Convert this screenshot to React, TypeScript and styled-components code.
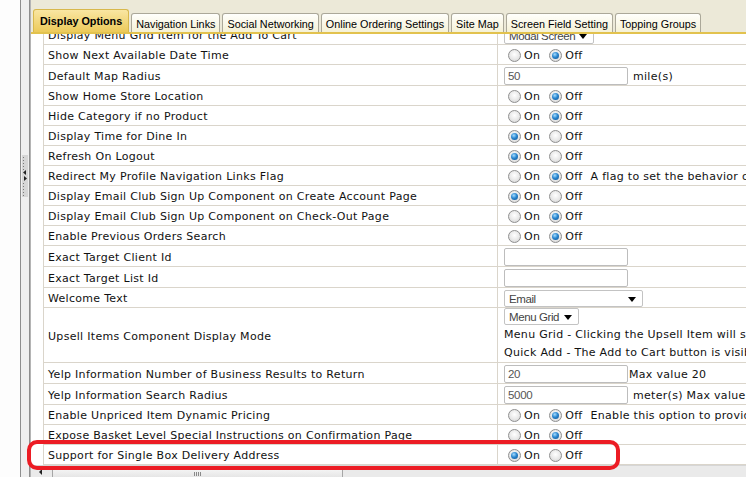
import React from 'react';
import styled, { createGlobalStyle, css } from 'styled-components';

const GlobalStyle = createGlobalStyle`
  html, body {
    margin: 0;
    padding: 0;
    background: #fff;
    overflow: hidden;
  }
  body {
    font-family: "DejaVu Sans", Verdana, sans-serif;
  }
`;

const Page = styled.div`
  position: relative;
  display: flex;
  width: 746px;
  height: 477px;
  overflow: hidden;
`;

const LeftPane = styled.div`
  flex: none;
  width: 20px;
  background: #fdfdfd;
`;

const Splitter = styled.div`
  flex: none;
  width: 8px;
  border-left: 1px solid #8e8e8e;
  border-right: 1px solid #8e8e8e;
  background: #efefef;
  padding-top: 155px;
  display: flex;
  flex-direction: column;
  align-items: center;
`;

const Handle = styled.div`
  width: 6px;
  height: 42px;
  background: #d6d6d6;
  display: flex;
`;

const Panel = styled.div`
  flex: 1;
  min-width: 0;
  display: flex;
  flex-direction: column;
  border-left: 1px solid #b4b4b4;
`;

const TabStrip = styled.div`
  flex: none;
  height: 32px;
  background: #ece9d8;
  border-bottom: 2px solid #e2c24e;
  display: flex;
  align-items: flex-end;
  gap: 2px;
  padding-left: 2px;
`;

const Tab = styled.div<{ $active?: boolean }>`
  flex: none;
  box-sizing: border-box;
  height: 19px;
  padding: 2px 4px 0;
  display: flex;
  align-items: center;
  font: 10.8px "Liberation Sans", Arial, sans-serif;
  color: #000;
  white-space: nowrap;
  border: 1px solid #aba899;
  border-bottom: none;
  border-radius: 3px 3px 0 0;
  background: linear-gradient(#fffffc, #f5f1d6);
  ${(p) =>
    p.$active &&
    css`
      height: 23px;
      padding: 0 6px;
      font-weight: bold;
      border-color: #d8b84c;
      background: linear-gradient(#f9e6a2, #ecca5a);
    `}
`;

const Body = styled.div`
  flex: 1;
  min-height: 0;
  overflow: hidden;
  padding-left: 12px;
  background: #fff;
`;

const Table = styled.div`
  margin-top: -9px;
  width: 900px;
  border-left: 1px solid #dad5cb;
`;

const Row = styled.div`
  display: grid;
  grid-template-columns: 453px 1fr;
  border-bottom: 1px solid #dad5cb;
`;

const Label = styled.div`
  min-height: 17px;
  padding: 2px 4px 0;
  display: flex;
  align-items: center;
  font-size: 11px;
  letter-spacing: 0.3px;
  color: #111;
  white-space: nowrap;
`;

const Value = styled.div<{ $stack?: boolean }>`
  border-left: 1px solid #dad5cb;
  padding: 2px 0 0 6px;
  min-height: 17px;
  display: flex;
  align-items: center;
  white-space: nowrap;
  font-size: 11px;
  letter-spacing: 0.3px;
  color: #111;
  ${(p) =>
    p.$stack &&
    css`
      flex-direction: column;
      align-items: flex-start;
      padding-top: 0;
    `}
`;

const RadioGroup = styled.div`
  display: flex;
  align-items: center;
  gap: 9px;
  padding-left: 4px;
`;

const RadioOption = styled.span`
  display: inline-flex;
  align-items: center;
  gap: 3px;
`;

const RadioDot = styled.span<{ $checked: boolean }>`
  box-sizing: border-box;
  width: 13px;
  height: 13px;
  border-radius: 50%;
  border: 1px solid #8f8f8f;
  background: radial-gradient(circle at 50% 40%, #ffffff 0%, #e8e8e8 55%, #cdcdcd 100%);
  display: inline-flex;
  align-items: center;
  justify-content: center;
  ${(p) =>
    p.$checked &&
    css`
      &::after {
        content: '';
        width: 7px;
        height: 7px;
        border-radius: 50%;
        background: radial-gradient(circle at 40% 35%, #a6dcff 0%, #2b87cf 45%, #0c4c8c 100%);
      }
    `}
`;

const Note = styled.span`
  margin-left: 8px;
`;

const TextBox = styled.input`
  box-sizing: border-box;
  width: 124px;
  height: 18px;
  margin: 0;
  border: 1px solid #bdbdbd;
  border-radius: 2px;
  padding: 0 3px;
  font: 11.5px "Liberation Sans", Arial, sans-serif;
  letter-spacing: -0.3px;
  color: #555;
  background: #fff;
  outline: none;
`;

const Suffix = styled.span<{ $tight?: boolean }>`
  margin-left: ${(p) => (p.$tight ? 1 : 5)}px;
`;

const Select = styled.div<{ $width: number }>`
  box-sizing: border-box;
  width: ${(p) => p.$width}px;
  height: 17px;
  border: 1px solid #c3c3c3;
  border-radius: 2px;
  padding: 0 6px 0 4px;
  display: flex;
  align-items: center;
  justify-content: space-between;
  font: 11.5px "Liberation Sans", Arial, sans-serif;
  letter-spacing: -0.4px;
  color: #444;
  background: #fff;
`;

const Caret = styled.span`
  width: 0;
  height: 0;
  margin-top: 2px;
  border-left: 4px solid transparent;
  border-right: 4px solid transparent;
  border-top: 5px solid #000;
`;

const Notes = styled.div`
  margin-top: 1px;
  line-height: 18px;
`;

const HScroll = styled.div`
  flex: none;
  height: 11px;
  border-top: 1px solid #d6d6d6;
  background: #eaeaea;
  display: flex;
  align-items: flex-start;
`;

const ScrollArrow = styled.div`
  flex: none;
  width: 19px;
  height: 11px;
  display: flex;
  align-items: center;
  justify-content: center;
  &::before {
    content: '';
    border-top: 3px solid transparent;
    border-bottom: 3px solid transparent;
    border-right: 3px solid #222;
  }
`;

const Thumb = styled.div`
  flex: none;
  box-sizing: border-box;
  width: 291px;
  height: 12px;
  margin: 1px 0 0 2px;
  border: 1px solid #a6a6a6;
  border-bottom: none;
  border-radius: 2px 2px 0 0;
  background: linear-gradient(#f7f7f7, #e2e2e2);
  display: flex;
  justify-content: center;
  align-items: center;
  gap: 1px;
`;

const Grip = styled.span`
  width: 1px;
  height: 4px;
  background: #8a8a8a;
`;

const Callout = styled.div`
  position: absolute;
  left: 27px;
  top: 440px;
  width: 593px;
  height: 30px;
  box-sizing: border-box;
  border: 4px solid #ec1c24;
  border-radius: 10px;
  pointer-events: none;
`;

const tabs = [
  'Display Options',
  'Navigation Links',
  'Social Networking',
  'Online Ordering Settings',
  'Site Map',
  'Screen Field Setting',
  'Topping Groups',
];

type Setting =
  | { label: string; kind: 'radio'; on: boolean; note?: string }
  | { label: string; kind: 'input'; text: string; suffix?: string; tight?: boolean }
  | { label: string; kind: 'select'; text: string; width: number }
  | { label: string; kind: 'upsell' };

const settings: Setting[] = [
  { label: 'Display Menu Grid Item for the Add To Cart', kind: 'select', text: 'Modal Screen', width: 90 },
  { label: 'Show Next Available Date Time', kind: 'radio', on: false },
  { label: 'Default Map Radius', kind: 'input', text: '50', suffix: 'mile(s)' },
  { label: 'Show Home Store Location', kind: 'radio', on: false },
  { label: 'Hide Category if no Product', kind: 'radio', on: false },
  { label: 'Display Time for Dine In', kind: 'radio', on: true },
  { label: 'Refresh On Logout', kind: 'radio', on: true },
  {
    label: 'Redirect My Profile Navigation Links Flag',
    kind: 'radio',
    on: false,
    note: 'A flag to set the behavior of the navigation links',
  },
  { label: 'Display Email Club Sign Up Component on Create Account Page', kind: 'radio', on: true },
  { label: 'Display Email Club Sign Up Component on Check-Out Page', kind: 'radio', on: false },
  { label: 'Enable Previous Orders Search', kind: 'radio', on: false },
  { label: 'Exact Target Client Id', kind: 'input', text: '' },
  { label: 'Exact Target List Id', kind: 'input', text: '' },
  { label: 'Welcome Text', kind: 'select', text: 'Email', width: 139 },
  { label: 'Upsell Items Component Display Mode', kind: 'upsell' },
  {
    label: 'Yelp Information Number of Business Results to Return',
    kind: 'input',
    text: '20',
    suffix: 'Max value 20',
    tight: true,
  },
  { label: 'Yelp Information Search Radius', kind: 'input', text: '5000', suffix: 'meter(s) Max value 40000' },
  {
    label: 'Enable Unpriced Item Dynamic Pricing',
    kind: 'radio',
    on: false,
    note: 'Enable this option to provide dynamic pricing',
  },
  { label: 'Expose Basket Level Special Instructions on Confirmation Page', kind: 'radio', on: false },
  { label: 'Support for Single Box Delivery Address', kind: 'radio', on: true },
];

function OnOff({ on }: { on: boolean }) {
  return (
    <RadioGroup>
      <RadioOption>
        <RadioDot $checked={on} />
        On
      </RadioOption>
      <RadioOption>
        <RadioDot $checked={!on} />
        Off
      </RadioOption>
    </RadioGroup>
  );
}

function renderValue(s: Setting) {
  switch (s.kind) {
    case 'radio':
      return (
        <Value>
          <OnOff on={s.on} />
          {s.note && <Note>{s.note}</Note>}
        </Value>
      );
    case 'input':
      return (
        <Value>
          <TextBox readOnly value={s.text} />
          {s.suffix && <Suffix $tight={s.tight}>{s.suffix}</Suffix>}
        </Value>
      );
    case 'select':
      return (
        <Value>
          <Select $width={s.width}>
            {s.text}
            <Caret />
          </Select>
        </Value>
      );
    case 'upsell':
      return (
        <Value $stack>
          <Select $width={75}>
            Menu Grid
            <Caret />
          </Select>
          <Notes>
            Menu Grid - Clicking the Upsell Item will show the item in the menu grid
            <br />
            Quick Add - The Add to Cart button is visible on each upsell item
          </Notes>
        </Value>
      );
  }
}

export default function App() {
  return (
    <>
      <GlobalStyle />
      <Page>
        <LeftPane />
        <Splitter>
          <Handle>
            <svg width="6" height="42" viewBox="0 0 6 42">
              {[2, 5, 8, 11, 14].map((y) => (
                <rect key={'a' + y} x="1" y={y} width="1" height="1" fill="#7a7a7a" />
              ))}
              <path d="M4 15 L1 17.5 L4 20 Z" fill="#222" />
              <path d="M2 21 L5 23.5 L2 26 Z" fill="#222" />
              {[28, 31, 34, 37, 40].map((y) => (
                <rect key={'b' + y} x="1" y={y} width="1" height="1" fill="#7a7a7a" />
              ))}
            </svg>
          </Handle>
        </Splitter>
        <Panel>
          <TabStrip>
            {tabs.map((t, i) => (
              <Tab key={t} $active={i === 0}>
                {t}
              </Tab>
            ))}
          </TabStrip>
          <Body>
            <Table>
              {settings.map((s) => (
                <Row key={s.label}>
                  <Label>{s.label}</Label>
                  {renderValue(s)}
                </Row>
              ))}
            </Table>
          </Body>
          <HScroll>
            <ScrollArrow />
            <Thumb>
              <Grip />
              <Grip />
              <Grip />
              <Grip />
            </Thumb>
          </HScroll>
        </Panel>
        <Callout />
      </Page>
    </>
  );
}
